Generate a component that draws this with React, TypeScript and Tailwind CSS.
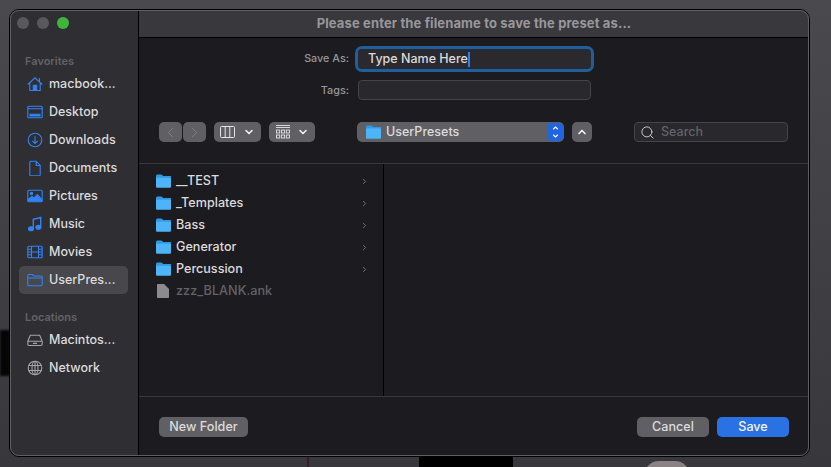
import { ChevronDown, ChevronLeft, ChevronRight, ChevronUp, Search } from "lucide-react";

const font = { fontFamily: "Inter, 'Noto Sans', sans-serif" };

const BlueFolder = ({ className = "w-[15px] h-[14px]" }: { className?: string }) => (
  <svg viewBox="0 0 15 14" className={className}>
    <path d="M0 2.2C0 1 .7.4 1.8.4h3c.8 0 1.2.3 1.7.9l.6.7H15v1.5H0z" fill="#2a9be8" />
    <path d="M0 3.2h13.6c.9 0 1.4.5 1.4 1.4v7.8c0 .9-.5 1.4-1.4 1.4H1.4C.5 13.8 0 13.3 0 12.4z" fill="#4db5f7" />
  </svg>
);

const icons: Record<string, React.ReactNode> = {
  home: (
    <>
      <path d="M.8 8.500 8 1.800l7.200 6.700M2.800 6.800v7.700h10.400V6.800M12.500 2v3.500" />
      <path d="M6.300 14.500V9.300h3.400v5.200z" fill="#3383f5" />
    </>
  ),
  desktop: (
    <>
      <rect x=".8" y="2.300" width="14.400" height="11.400" rx="1" />
      <path d="M.8 4.800h14.400" />
      <path d="M3 10.300h10v1.700H3z" fill="#3383f5" />
    </>
  ),
  downloads: (
    <>
      <circle cx="8" cy="8" r="6.800" />
      <path d="M8 4.300v7.200M5.300 8.900 8 11.500l2.700-2.600" />
    </>
  ),
  documents: <path d="M2.800 2.300c0-.7.400-1.100 1.100-1.100h5.300l4 4.300v9.200c0 .7-.4 1.100-1.100 1.100H3.900c-.7 0-1.100-.4-1.100-1.100zM9.200 1.200v4.300h4" />,
  pictures: (
    <>
      <rect x=".8" y="2.300" width="14.400" height="11.400" rx="1" />
      <circle cx="4.500" cy="5.500" r="1.200" fill="#3383f5" />
      <path d="m1.200 11.500 3.800-3 2 1.500 3.200-3.500 4.600 5v1.500H1.200z" fill="#3383f5" />
    </>
  ),
  music: (
    <>
      <path d="M6.300 12.500V3.300l7.400-1.800v9.500" strokeWidth="1.400" />
      <ellipse cx="4" cy="12.800" rx="2.500" ry="2" fill="#3383f5" />
      <ellipse cx="11.400" cy="11.300" rx="2.500" ry="2" fill="#3383f5" />
    </>
  ),
  movies: (
    <>
      <rect x=".8" y="2.300" width="14.400" height="11.400" rx="1" />
      <path d="M4.500 2.300v11.400M11.500 2.300v11.400M.8 5.300h3.700M.8 8h3.700M.8 10.700h3.700M11.500 5.300h3.700M11.500 8h3.700M11.500 10.700h3.700M4.500 8h7" />
    </>
  ),
  folder: <path d="M.8 3.800c0-.8.400-1.300 1.200-1.300h3.500L7 4h7c.8 0 1.200.4 1.200 1.200v7.400c0 .8-.4 1.200-1.200 1.200H2c-.8 0-1.200-.4-1.200-1.200zM.8 6h14.400" />,
  disk: (
    <>
      <path d="M.8 9.300 3.300 3.300h9.400l2.500 6v3c0 .8-.4 1.200-1.200 1.200H2c-.8 0-1.200-.4-1.200-1.200zM.8 9.300h14.400" />
      <path d="M6 11.400h4" />
    </>
  ),
  network: (
    <>
      <circle cx="8" cy="8" r="6.800" />
      <ellipse cx="8" cy="8" rx="3" ry="6.800" />
      <path d="M2 5.500h12M2 10.500h12M8 1.200v13.600" />
    </>
  ),
};

const SideItem = ({ icon, label, selected = false, gray = false }: { icon: string; label: string; selected?: boolean; gray?: boolean }) => (
  <div className={`flex items-center h-[28px] rounded-[5px] pl-[8px] gap-[6px] ${selected ? "bg-[#48474b]" : ""}`}>
    <svg
      viewBox="0 0 16 16"
      fill="none"
      stroke={gray ? "#a5a4a8" : "#3383f5"}
      strokeWidth="1.100"
      className="w-[16px] h-[16px] shrink-0"
    >
      {icons[icon]}
    </svg>
    <span className="text-[12.5px] font-medium text-[#dcdbdd] whitespace-nowrap">{label}</span>
  </div>
);

const SideTitle = ({ children }: { children: string }) => (
  <div className="text-[11px] font-semibold text-[#636266] pl-[6px] h-[16px] leading-[16px]">{children}</div>
);

const files = ["__TEST", "_Templates", "Bass", "Generator", "Percussion"];

const GrayButton = ({ className = "", children }: { className?: string; children?: React.ReactNode }) => (
  <div className={`h-[20px] rounded-[5px] bg-[#605f63] flex items-center justify-center ${className}`}>{children}</div>
);

export default function App() {
  return (
    <div className="relative w-[831px] h-[467px] overflow-hidden bg-gradient-to-b from-[#4a494d] to-[#38373b] p-[9px] pb-[10px]" style={font}>
      {/* wallpaper peeking out under the window */}
      <div className="absolute left-0 top-[330px] w-[10px] h-[46px] bg-[#050505] blur-[1px]" />
      <div className="absolute left-[307px] top-[455px] w-[2px] h-[12px] bg-[#3a1c26]" />
      <div className="absolute left-[419px] top-[455px] w-[94px] h-[12px] bg-black" />
      <div className="absolute left-[644px] top-[461px] w-[46px] h-[30px] rounded-full bg-[#8b8383]" />

      <div className="relative flex w-[801px] h-[448px] rounded-[10px] overflow-hidden border border-black outline outline-[#5f5e62] -outline-offset-2">
        {/* sidebar */}
        <aside className="w-[129px] shrink-0 bg-[#2f2e32] border-r border-black pl-[9px] pr-[10px]">
          <div className="flex gap-[8px] pt-[7px] -ml-[2px]">
            <span className="w-[12px] h-[12px] rounded-full bg-[#59585c]" />
            <span className="w-[12px] h-[12px] rounded-full bg-[#59585c]" />
            <span className="w-[12px] h-[12px] rounded-full bg-[#3fb63b]" />
          </div>
          <div className="mt-[24px]">
            <SideTitle>Favorites</SideTitle>
          </div>
          <div className="mt-[1px]">
            <SideItem icon="home" label="macbook..." />
            <SideItem icon="desktop" label="Desktop" />
            <SideItem icon="downloads" label="Downloads" />
            <SideItem icon="documents" label="Documents" />
            <SideItem icon="pictures" label="Pictures" />
            <SideItem icon="music" label="Music" />
            <SideItem icon="movies" label="Movies" />
            <SideItem icon="folder" label="UserPres..." selected />
          </div>
          <div className="mt-[15px]">
            <SideTitle>Locations</SideTitle>
          </div>
          <div className="mt-[1px]">
            <SideItem icon="disk" label="Macintos..." gray />
            <SideItem icon="network" label="Network" gray />
          </div>
        </aside>

        {/* main pane */}
        <main className="flex-1 flex flex-col min-w-0 bg-[#1c1b1f]">
          <header className="h-[28px] shrink-0 bg-[#39383c] border-b border-black flex items-center justify-center">
            <span className="text-[13px] font-bold tracking-[0.13px] text-[#98979b]">
              Please enter the filename to save the preset as...
            </span>
          </header>

          <section className="h-[126px] shrink-0 border-b border-[#39383c] px-[20px] pt-[10px]">
            <div className="grid grid-cols-[190px_233px] gap-x-[9px] items-center">
              <label className="pt-[1px] text-right text-[10.8px] font-medium text-[#98979b]">Save As:</label>
              <div className="h-[20px] my-px rounded-[4px] bg-[#2a292d] outline-[3px] outline-[#1f5f9e] flex items-center px-[10px] text-[12.5px] font-medium text-[#dcdbdd]">
                <span>Type Name Here</span>
                <span className="w-[2px] h-[15px] bg-[#2f7ff0]" />
              </div>
              <label className="mt-[10px] pt-[2px] text-right text-[10.8px] font-medium text-[#98979b]">Tags:</label>
              <div className="mt-[10px] h-[20px] rounded-[4px] bg-[#29282c] border border-[#454448]" />
            </div>

            <div className="flex items-center mt-[22px]">
              <div className="flex gap-px">
                <GrayButton className="w-[23px]">
                  <ChevronLeft className="w-[17px] h-[17px] text-[#838286]" strokeWidth={1.3} />
                </GrayButton>
                <GrayButton className="w-[23px]">
                  <ChevronRight className="w-[17px] h-[17px] text-[#838286]" strokeWidth={1.3} />
                </GrayButton>
              </div>
              <GrayButton className="w-[47px] ml-[8px] gap-[8px]">
                <svg viewBox="0 0 15 12" fill="none" stroke="#e4e3e5" className="w-[15px] h-[12px]">
                  <rect x=".5" y=".5" width="14" height="11" rx="1" />
                  <path d="M5.200.5v11M9.800.5v11" />
                </svg>
                <ChevronDown className="w-[12px] h-[12px] text-[#f0eff1]" strokeWidth={3.2} />
              </GrayButton>
              <GrayButton className="w-[46px] ml-[8px] gap-[7px]">
                <svg viewBox="0 0 14 14" fill="none" stroke="#e4e3e5" strokeWidth=".9" className="w-[14px] h-[14px]">
                  <path d="M0 .5h14M0 2.500h14" />
                  <rect x=".5" y="5" width="3.200" height="3" />
                  <rect x="5.400" y="5" width="3.200" height="3" />
                  <rect x="10.300" y="5" width="3.200" height="3" />
                  <rect x=".5" y="10" width="3.200" height="3" />
                  <rect x="5.400" y="10" width="3.200" height="3" />
                  <rect x="10.300" y="10" width="3.200" height="3" />
                </svg>
                <ChevronDown className="w-[12px] h-[12px] text-[#f0eff1]" strokeWidth={3.2} />
              </GrayButton>
              <GrayButton className="w-[207px] ml-[42px] justify-start pl-[9px] pr-[1px] gap-[5px]">
                <BlueFolder />
                <span className="text-[12.5px] font-medium text-[#dcdbdd]">UserPresets</span>
                <span className="ml-auto w-[16px] h-[18px] rounded-[4px] bg-[#2264e0] flex flex-col items-center justify-center">
                  <ChevronUp className="w-[11px] h-[8px] text-white" strokeWidth={3.2} />
                  <ChevronDown className="w-[11px] h-[8px] text-white" strokeWidth={3.2} />
                </span>
              </GrayButton>
              <GrayButton className="w-[20px] ml-[8px]">
                <ChevronUp className="w-[12px] h-[12px] text-[#f0eff1]" strokeWidth={3.4} />
              </GrayButton>
              <div className="w-[154px] h-[20px] ml-[42px] rounded-[4px] bg-[#29282c] border border-[#454448] flex items-center pl-[5px] gap-[6px]">
                <Search className="w-[15px] h-[15px] text-[#d4d3d6]" strokeWidth={1.5} />
                <span className="pt-[1px] text-[12.5px] font-medium text-[#636266]">Search</span>
              </div>
            </div>
          </section>

          <section className="flex-1 min-h-0 flex">
            <div className="w-[245px] shrink-0 border-r border-black pt-[6px]">
              {files.map((name) => (
                <div key={name} className="flex items-center h-[22px] pl-[17px] pr-[14px] gap-[5px]">
                  <BlueFolder />
                  <span className="text-[12.6px] font-medium text-[#dcdbdd]">{name}</span>
                  <ChevronRight className="ml-auto w-[9px] h-[9px] text-[#77767a]" strokeWidth={2.5} />
                </div>
              ))}
              <div className="flex items-center h-[22px] pl-[18px] gap-[7px]">
                <svg viewBox="0 0 12 14" className="w-[12px] h-[14px]">
                  <path d="M0 1C0 .4.4 0 1 0h6l5 5v8c0 .6-.4 1-1 1H1c-.6 0-1-.4-1-1z" fill="#8b8a8e" />
                </svg>
                <span className="text-[12.7px] font-medium text-[#636266]">zzz_BLANK.ank</span>
              </div>
            </div>
            <div className="flex-1" />
          </section>

          <footer className="h-[60px] shrink-0 border-t border-[#39383c] flex items-center pl-[20px] pr-[20px] pt-[1px]">
            <GrayButton className="w-[89px] text-[12.6px] font-medium text-[#dcdbdd]">New Folder</GrayButton>
            <GrayButton className="w-[72px] ml-auto text-[12.6px] font-medium text-[#dcdbdd]">Cancel</GrayButton>
            <GrayButton className="w-[72px] ml-[8px] !bg-[#2a72e4] text-[12.6px] font-medium text-[#f2f2f4]">Save</GrayButton>
          </footer>
        </main>
      </div>
    </div>
  );
}
